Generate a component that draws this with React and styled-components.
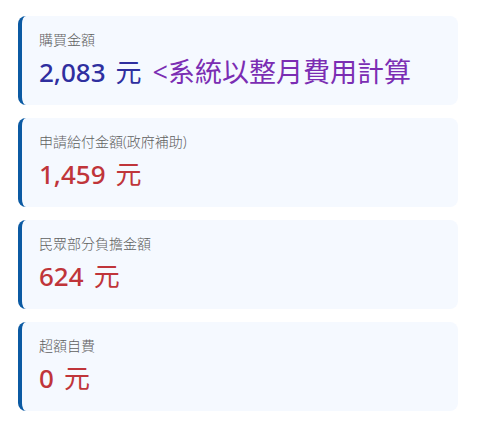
import React from 'react';
import styled, { createGlobalStyle } from 'styled-components';

const GlobalStyle = createGlobalStyle`
  body {
    margin: 0;
    background: #ffffff;
    font-family: "Open Sans", "Noto Sans CJK TC", sans-serif;
  }
`;

const items = [
  { label: '購買金額', amount: '2,083', tone: 'blue', note: '<系統以整月費用計算' },
  { label: '申請給付金額(政府補助)', amount: '1,459', tone: 'red' },
  { label: '民眾部分負擔金額', amount: '624', tone: 'red' },
  { label: '超額自費', amount: '0', tone: 'red' },
];

const tones = {
  blue: '#2f2f9f',
  red: '#c0353a',
};

function App() {
  return (
    <>
      <GlobalStyle />
      <Summary>
        {items.map((item) => (
          <Card key={item.label}>
            <Label>{item.label}</Label>
            <ValueRow>
              <Amount tone={item.tone}>{item.amount}<Unit>元</Unit></Amount>
              {item.note && <Note>{item.note}</Note>}
            </ValueRow>
          </Card>
        ))}
      </Summary>
    </>
  );
}

export default App;

const Summary = styled.div`
display:flex;
flex-direction:column;
gap:13px;
padding:16px 20px 0 18px;
`;

const Card = styled.div`
height:89px;
box-sizing:border-box;
display:flex;
flex-direction:column;
padding:14px 16px 0 17px;
background:#f5f9ff;
border-left:4px solid #0b5aa3;
border-radius:8px;
`;

const Label = styled.div`
font-size:14px;
line-height:20px;
font-weight:300;
color:#606060;
`;

const ValueRow = styled.div`
display:flex;
align-items:baseline;
gap:11px;
margin-top:4px;
`;

const Amount = styled.span`
font-family:"Noto Sans", "Noto Sans CJK TC", sans-serif;
font-size:26px;
line-height:34px;
font-weight:500;
color:${(p) => tones[p.tone]};
`;

const Unit = styled.span`
font-family:"Noto Sans CJK TC", sans-serif;
font-weight:400;
margin-left:10px;
`;

const Note = styled.span`
font-size:27px;
line-height:34px;
font-weight:400;
color:#7b2db3;
`;
